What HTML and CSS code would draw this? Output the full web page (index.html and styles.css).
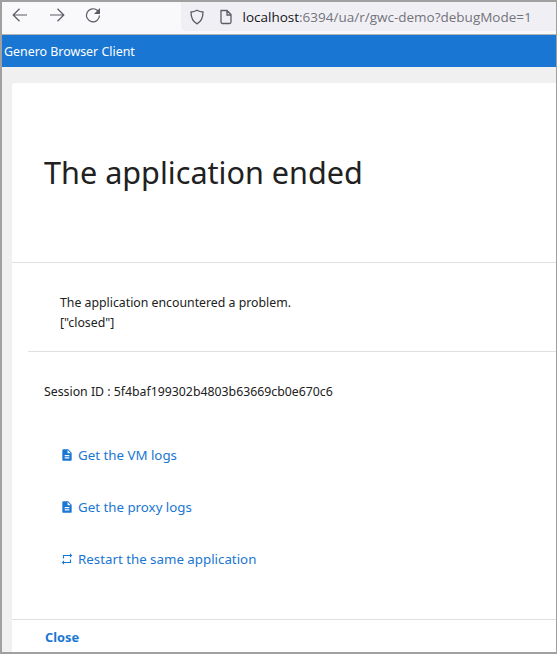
FILE: index.html
```html
<!DOCTYPE html>
<html lang="en">
<head>
    <meta charset="UTF-8">
    <meta name="viewport" content="width=device-width, initial-scale=1.0">
    <title>Genero Browser Client</title>
    <link rel="stylesheet" href="styles.css">
</head>
<body>

<div class="frame">
    <div class="toolbar">
        <svg class="nav-icon" viewBox="0 0 16 16"><path d="M15 8H1M7.500 1.800L1.200 8l6.300 6.200"/></svg>
        <svg class="nav-icon" viewBox="0 0 16 16"><path d="M1 8h14M8.500 1.800L14.800 8l-6.300 6.200"/></svg>
        <svg class="nav-icon" viewBox="0 0 16 16"><path d="M14.500 8.500A6.500 6.500 0 1 1 11.500 2.800L14 5"/><path class="fill" d="M15 1v6H9z"/></svg>
        <div class="urlbar">
            <svg class="shield" viewBox="0 0 16 16"><path d="M8 1.200c2 1.200 4 1.700 6 1.800 0 5.500-1.500 9.500-6 11.800C3.500 12.500 2 8.500 2 3c2-.1 4-.6 6-1.800z"/></svg>
            <svg class="page" viewBox="0 0 16 16"><path d="M3 1.500h6l4 4V13a1.500 1.500 0 0 1-1.500 1.500h-7A1.500 1.500 0 0 1 3 13zM9 1.500V6h4"/></svg>
            <span class="url"><span class="host">localhost</span>:6394/ua/r/gwc-demo?debugMode=1</span>
        </div>
    </div>

    <div class="appbar">Genero Browser Client</div>

    <div class="content">
        <div class="card">
            <h1 class="title">The application ended</h1>
            <div class="message">
                <p>The application encountered a problem.</p>
                <p>["closed"]</p>
            </div>
            <div class="session">Session ID : 5f4baf199302b4803b63669cb0e670c6</div>
            <div class="links">
                <a class="link" href="#">
                    <svg class="link-icon" viewBox="0 0 24 24"><path d="M14 2H6a2 2 0 0 0-2 2v16a2 2 0 0 0 2 2h12a2 2 0 0 0 2-2V8zm2 16H8v-2h8zm0-4H8v-2h8zm-3-5V3.500L18.500 9z"/></svg>
                    Get the VM logs
                </a>
                <a class="link" href="#">
                    <svg class="link-icon" viewBox="0 0 24 24"><path d="M14 2H6a2 2 0 0 0-2 2v16a2 2 0 0 0 2 2h12a2 2 0 0 0 2-2V8zm2 16H8v-2h8zm0-4H8v-2h8zm-3-5V3.500L18.500 9z"/></svg>
                    Get the proxy logs
                </a>
                <a class="link" href="#">
                    <svg class="link-icon" viewBox="0 0 24 24"><path d="M7 7h10v3l4-4-4-4v3H5v6h2zm10 10H7v-3l-4 4 4 4v-3h12v-6h-2z"/></svg>
                    Restart the same application
                </a>
            </div>
            <div class="actions"><a class="close" href="#">Close</a></div>
        </div>
    </div>
</div>

</body>
</html>
```

FILE: styles.css
```css
html, body {
    height: 100%;
}
body {
    margin: 0;
    font-family: "Noto Sans", sans-serif;
    overflow: hidden;
}
.frame {
    box-sizing: border-box;
    height: 654px;
    display: flex;
    flex-direction: column;
    border: 2px solid #a0a0a0;
    border-right-width: 1px;
    overflow: hidden;
}
.toolbar {
    height: 32px;
    flex: none;
    display: flex;
    background-color: #f9f9fb;
    border-bottom: 1px solid #b4b4b4;
    padding-left: 10px;
}
.nav-icon {
    width: 16px;
    height: 16px;
    margin: 5px 20.500px 0 0;
    fill: none;
    stroke: #5b5b66;
    stroke-width: 1.200;
}
.nav-icon .fill {
    fill: #5b5b66;
    stroke: none;
}
.urlbar {
    flex: 1;
    height: 29px;
    margin-left: 59px;
    padding-left: 8px;
    display: flex;
    align-items: center;
    background-color: #f0f0f4;
    border-bottom-left-radius: 5px;
}
.shield {
    width: 16px;
    height: 16px;
    fill: none;
    stroke: #5b5b66;
    stroke-width: 1.300;
}
.page {
    width: 16px;
    height: 16px;
    margin-left: 13px;
    fill: none;
    stroke: #5b5b66;
    stroke-width: 1.300;
}
.url {
    margin-left: 9px;
    font-family: "Open Sans", sans-serif;
    font-size: 13.500px;
    color: #73737d;
    white-space: nowrap;
}
.host {
    color: #15141a;
}
.appbar {
    height: 32px;
    flex: none;
    box-sizing: border-box;
    padding-left: 2px;
    background-color: #1976d2;
    color: white;
    font-size: 12.400px;
    line-height: 33px;
}
.content {
    flex: 1;
    min-height: 0;
    background-color: #f0f0f0;
    padding: 16px 0 0 10px;
}
.card {
    height: 100%;
    background-color: white;
    border-top-left-radius: 3px;
    display: flex;
    flex-direction: column;
    font-size: 12.300px;
    color: #212121;
}
.title {
    margin: 0;
    height: 180px;
    box-sizing: border-box;
    padding: 67px 0 0 32px;
    border-bottom: 1px solid #e0e0e0;
    font-size: 30.600px;
    font-weight: normal;
    line-height: 44px;
}
.message {
    margin-left: 16px;
    padding: 30px 0 18px 32px;
    border-bottom: 1px solid #e0e0e0;
}
.message p {
    margin: 0;
    line-height: 20px;
}
.session {
    margin-top: 30px;
    padding-left: 32px;
    line-height: 20px;
}
.links {
    margin-top: 43px;
    padding-left: 48px;
    display: flex;
    flex-direction: column;
    gap: 32px;
}
.link {
    display: flex;
    align-items: center;
    gap: 4px;
    height: 20px;
    color: #1976d2;
    font-size: 13.300px;
    text-decoration: none;
}
.link-icon {
    width: 14px;
    height: 14px;
    fill: #1976d2;
}
.actions {
    margin-top: auto;
    height: 32px;
    border-top: 1px solid #e0e0e0;
    padding-left: 33px;
    line-height: 35px;
}
.close {
    color: #1976d2;
    font-size: 12.800px;
    font-weight: bold;
    text-decoration: none;
}
```
